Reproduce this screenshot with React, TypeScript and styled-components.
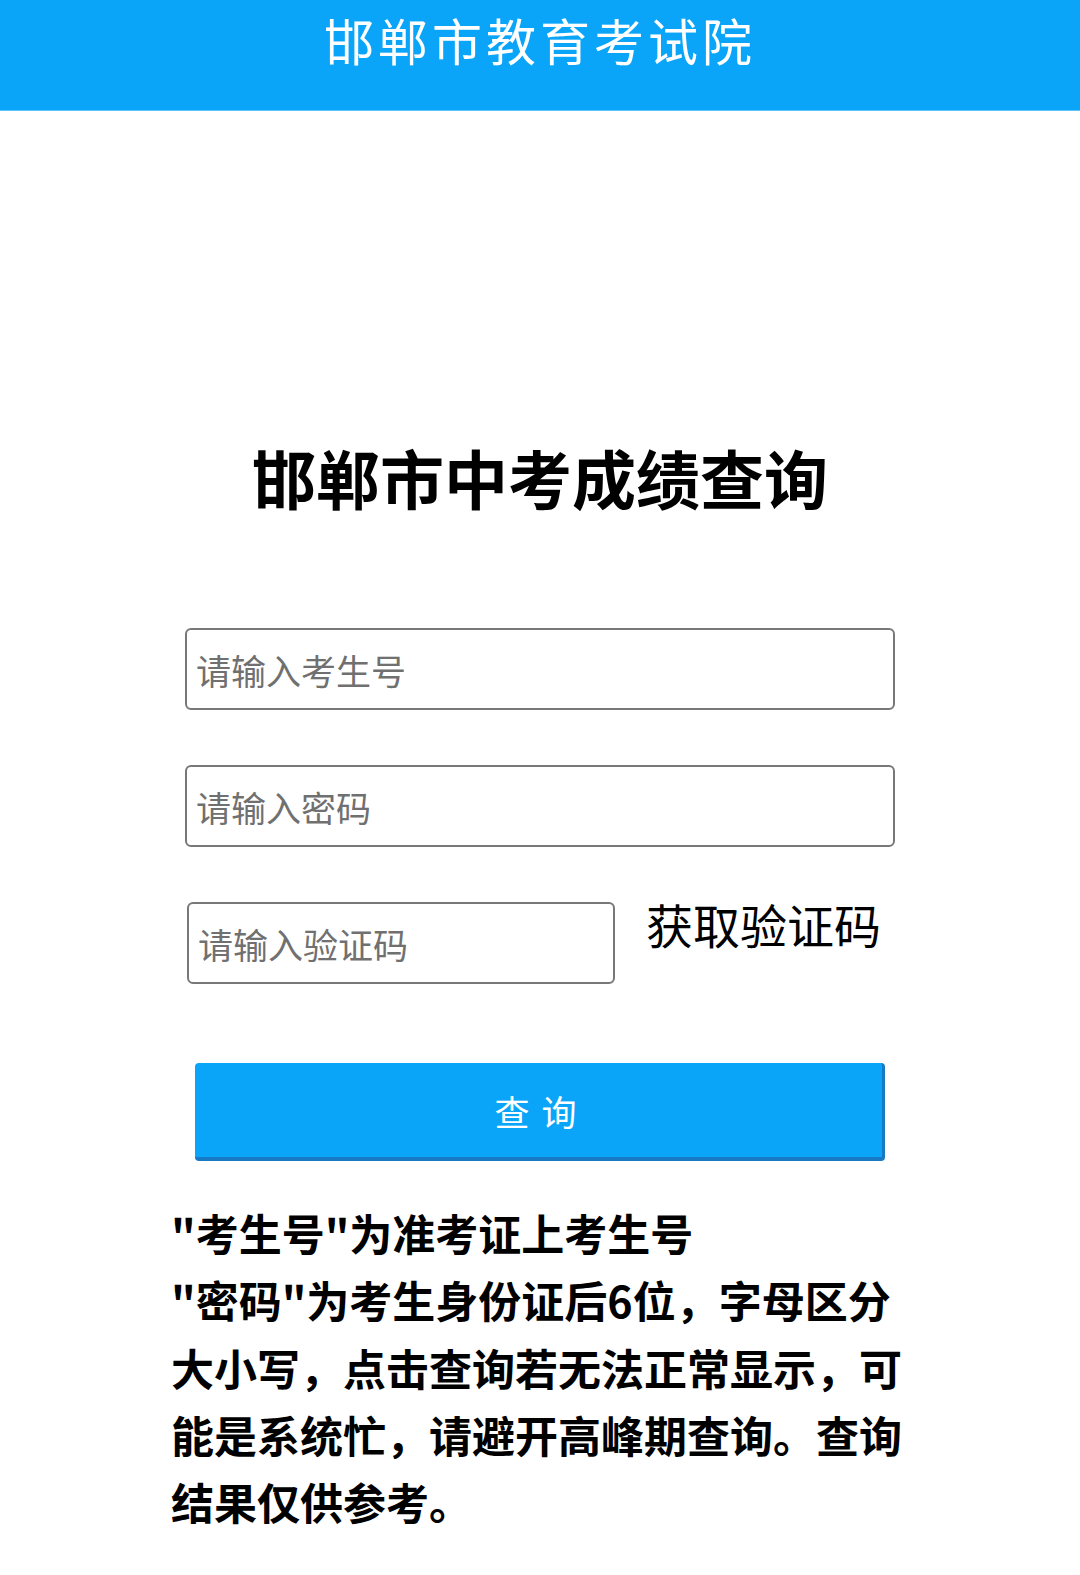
import React, { useState } from 'react';
import styled, { createGlobalStyle } from 'styled-components';

const GlobalStyle = createGlobalStyle`
  html, body {
    margin: 0;
    padding: 0;
    background: #ffffff;
  }
  body {
    font-family: "Noto Sans CJK SC", "Noto Sans", sans-serif;
  }
`;

const Page = styled.div`
  width: 1080px;
  min-height: 1575px;
  background: #ffffff;
`;

const Header = styled.header`
  height: 110px;
  background: #0aa5f9;
  box-shadow: 0 1px 0 #5cc3fb;
  display: flex;
  justify-content: center;
  padding-top: 6px;
  box-sizing: border-box;
`;

const HeaderTitle = styled.h1`
  margin: 0;
  color: #ffffff;
  font-size: 50px;
  font-weight: 400;
  letter-spacing: 4px;
  line-height: 66px;
`;

const Main = styled.main`
  display: flex;
  flex-direction: column;
  align-items: center;
  padding-top: 320px;
`;

const Title = styled.h2`
  margin: 0;
  font-size: 64px;
  font-weight: 700;
  color: #000000;
  line-height: 92px;
`;

const Form = styled.form`
  width: 710px;
  margin-top: 106px;
  margin-left: 0;
  display: flex;
  flex-direction: column;
  gap: 55px;
`;

const Row = styled.div`
  display: flex;
  align-items: flex-start;
`;

const Input = styled.input<{ $width?: number }>`
  width: ${(p) => (p.$width ? `${p.$width}px` : '100%')};
  height: 82px;
  box-sizing: border-box;
  border: 2px solid #787878;
  border-radius: 6px;
  padding: 0 9px;
  font-family: "Noto Sans CJK SC", sans-serif;
  font-size: 35px;
  color: #333;
  background: #fff;
  outline: none;

  &::placeholder {
    color: #707070;
  }
`;

const CodeInput = styled(Input)`
  margin-left: 2px;
`;

const CodeLink = styled.span`
  margin-left: 31px;
  margin-top: -11px;
  font-size: 47px;
  line-height: 66px;
  color: #000;
  cursor: pointer;
`;

const SubmitButton = styled.button`
  width: 690px;
  height: 98px;
  margin: 24px 0 0 10px;
  background: #0aa5f9;
  border: none;
  border-right: 3px solid #1879c4;
  border-bottom: 4px solid #1879c4;
  border-radius: 4px;
  color: #ffffff;
  font-family: "Noto Sans CJK SC", sans-serif;
  font-size: 35px;
  letter-spacing: 12px;
  padding-left: 12px;
  cursor: pointer;
`;

const Notes = styled.div`
  width: 740px;
  margin-top: 38px;
  margin-left: 2px;
  font-size: 43px;
  font-weight: 700;
  line-height: 67.3px;
  color: #000;

  p {
    margin: 0;
  }
`;

const App: React.FC = () => {
  const [examNo, setExamNo] = useState('');
  const [password, setPassword] = useState('');
  const [code, setCode] = useState('');

  return (
    <Page>
      <GlobalStyle />
      <Header>
        <HeaderTitle>邯郸市教育考试院</HeaderTitle>
      </Header>
      <Main>
        <Title>邯郸市中考成绩查询</Title>
        <Form onSubmit={(e) => e.preventDefault()}>
          <Input placeholder="请输入考生号" value={examNo} onChange={(e) => setExamNo(e.target.value)} />
          <Input
            type="password"
            placeholder="请输入密码"
            value={password}
            onChange={(e) => setPassword(e.target.value)}
          />
          <Row>
            <CodeInput $width={428} placeholder="请输入验证码" value={code} onChange={(e) => setCode(e.target.value)} />
            <CodeLink>获取验证码</CodeLink>
          </Row>
          <SubmitButton type="submit">查询</SubmitButton>
        </Form>
        <Notes>
          <p>"考生号"为准考证上考生号</p>
          <p>"密码"为考生身份证后6位，字母区分大小写，点击查询若无法正常显示，可能是系统忙，请避开高峰期查询。查询结果仅供参考。</p>
        </Notes>
      </Main>
    </Page>
  );
};

export default App;
